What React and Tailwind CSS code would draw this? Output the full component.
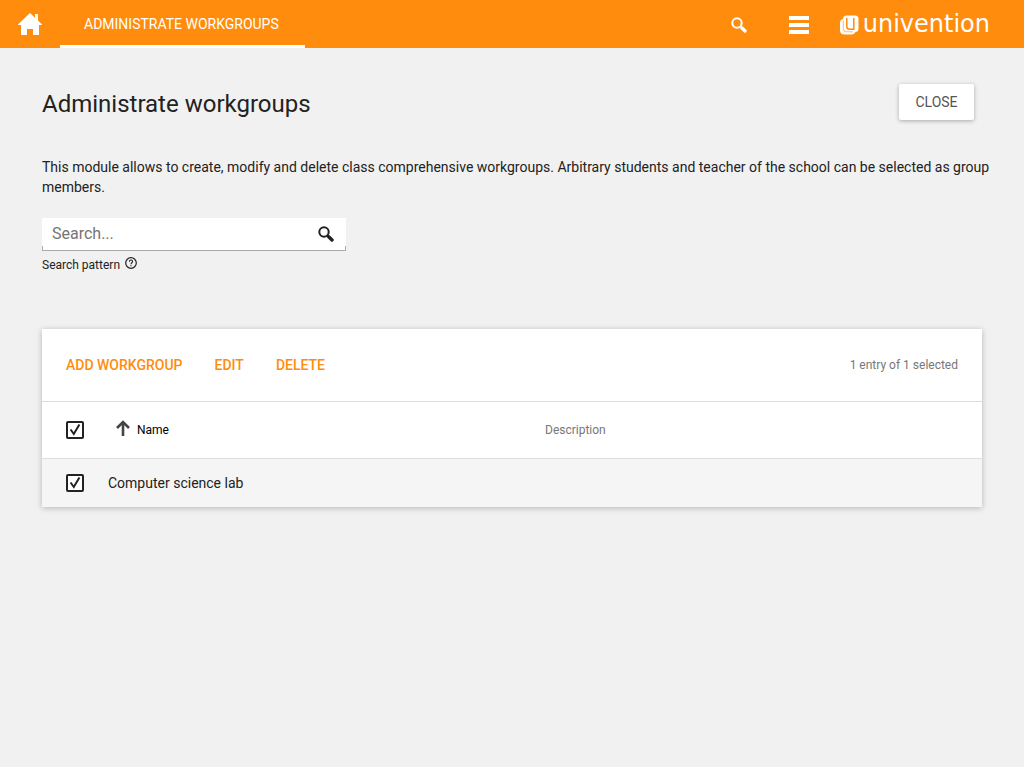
import { useState } from "react";

function HomeIcon() {
  return (
    <svg viewBox="0 0 24 22" className="h-[22px] w-6" fill="currentColor" aria-hidden="true">
      <path d="M12 0 L17 4.700 V1 H20 V7.500 L24 11.500 V12 H21 V22 H15 V16 H9 V22 H3 V12 H0 V11.500 Z" />
    </svg>
  );
}

function SearchIcon() {
  return (
    <svg viewBox="0 0 16 16" className="size-4" fill="none" stroke="currentColor" aria-hidden="true">
      <circle cx="6" cy="6" r="4.700" strokeWidth="2" />
      <path d="M9.300 9.300 L10.500 10.500" strokeWidth="2" />
      <path d="M10.700 10.700 L14 14" strokeWidth="3.400" strokeLinecap="round" />
    </svg>
  );
}

function MenuIcon() {
  return (
    <svg viewBox="0 0 20 18" className="h-[18px] w-5" fill="currentColor" aria-hidden="true">
      <path d="M0 0h20v4H0zM0 7h20v4H0zM0 14h20v4H0z" />
    </svg>
  );
}

function LogoMark() {
  return (
    <svg viewBox="0 0 19 20" className="h-5 w-[19px]" fill="none" aria-hidden="true">
      <path d="M3 4 Q0 4.500 0 8 V15 Q0 19.500 4.500 19.500 H11 Q15 19.500 15.500 16.500 L4 15 Z" fill="white" />
      <rect x="3" y="0.500" width="15.500" height="16.500" rx="3.500" fill="white" />
      <path d="M6.800 3 V11.500 Q6.800 14.300 9.500 14.300 H13.800 V3" stroke="#ff8c0c" strokeWidth="1.500" />
      <path d="M3.300 5.500 V13.500 Q3.300 16.800 6.500 16.800 H13" stroke="#ff8c0c" strokeWidth="0.600" />
    </svg>
  );
}

function HelpIcon() {
  return (
    <svg viewBox="0 0 12 12" className="size-3" fill="none" stroke="currentColor" aria-hidden="true">
      <circle cx="6" cy="6" r="5.300" strokeWidth="1.200" />
      <path d="M4.400 4.800 C4.400 2.500 7.600 2.500 7.600 4.600 C7.600 5.800 6 5.800 6 7.200" strokeWidth="1.100" />
      <path d="M6 8.200 V9.300" strokeWidth="1.200" />
    </svg>
  );
}

function SortIcon() {
  return (
    <svg viewBox="0 0 14 16" className="h-4 w-3.5" fill="none" stroke="#444" strokeWidth="2.600" aria-hidden="true">
      <path d="M7 16 V2 M1 8 L7 2 L13 8" />
    </svg>
  );
}

function Checkbox({ label, checked, onChange }) {
  return (
    <label className="grid size-[18px] place-items-center">
      <input
        type="checkbox"
        aria-label={label}
        checked={checked}
        onChange={onChange}
        className="col-start-1 row-start-1 size-[18px] appearance-none rounded-xs border-2 border-[#222] bg-white"
      />
      {checked && (
        <svg viewBox="0 0 18 18" className="pointer-events-none col-start-1 row-start-1 size-[18px]" fill="none" stroke="#222" strokeWidth="2" aria-hidden="true">
          <path d="M4.600 8.500 L7.800 13 L13.400 3.500" />
        </svg>
      )}
    </label>
  );
}

const actions = ["Add workgroup", "Edit", "Delete"];

export default function App() {
  const [selected, setSelected] = useState(true);
  const toggle = () => setSelected(!selected);

  return (
    <div className="min-h-screen bg-[#f1f1f1] font-['Roboto',sans-serif] text-sm text-[#222]">
      <header className="flex h-12 bg-[#ff8c0c] text-white">
        <button aria-label="Home" className="flex w-15 items-center justify-center">
          <HomeIcon />
        </button>
        <button className="min-w-[245px] border-b-3 border-white px-6 pt-[3px] text-left uppercase">
          Administrate workgroups
        </button>
        <div className="ml-auto flex items-center pt-px pr-[34px]">
          <button aria-label="Search" className="mr-[42px]">
            <SearchIcon />
          </button>
          <button aria-label="Menu" className="mr-[31px]">
            <MenuIcon />
          </button>
          <a href="#" className="flex items-center gap-1">
            <LogoMark />
            <span className="pb-0.5 font-['DejaVu_Sans',sans-serif] text-2xl leading-6">univention</span>
          </a>
        </div>
      </header>

      <main className="px-[42px] pt-9">
        <div className="flex items-center justify-between pr-2">
          <h1 className="pt-1 text-2xl">Administrate workgroups</h1>
          <button className="h-9 min-w-[75px] rounded-xs bg-white px-4 text-[#555] uppercase shadow-[0_1px_4px_rgba(0,0,0,0.3)]">
            Close
          </button>
        </div>

        <p className="-mr-6 mt-[37px] leading-5">
          This module allows to create, modify and delete class comprehensive workgroups. Arbitrary students and teacher
          of the school can be selected as group members.
        </p>

        <form className="mt-[21px] w-[304px]" onSubmit={(e) => e.preventDefault()}>
          <div className="flex h-[33px] flex-col bg-white">
            <div className="flex h-7 items-end">
              <input
                id="pattern"
                type="text"
                placeholder="Search..."
                className="h-6 min-w-0 flex-1 px-2.5 text-base outline-none placeholder:text-[#757575]"
              />
              <button aria-label="Start search" className="mr-3 mb-1">
                <SearchIcon />
              </button>
            </div>
            <div className="flex-1 border-x border-b border-[#aaa]" />
          </div>
          <div className="mt-1 flex items-center gap-[5px] text-xs leading-5">
            <label htmlFor="pattern">Search pattern</label>
            <span className="pb-1">
              <HelpIcon />
            </span>
          </div>
        </form>

        <section className="mt-[54px] bg-white shadow-[0_1px_6px_rgba(0,0,0,0.25)]">
          <div className="flex h-[72px] items-center gap-8 px-6">
            {actions.map((name) => (
              <button key={name} className="font-medium text-[#ff8c0c] uppercase">
                {name}
              </button>
            ))}
            <span className="ml-auto text-xs text-[#777]">{selected ? 1 : 0} entry of 1 selected</span>
          </div>
          <table className="w-full table-fixed text-left">
            <thead>
              <tr className="h-[57px] border-t border-[#ddd] text-xs">
                <th className="w-[58px] pl-6">
                  <Checkbox label="Select all" checked={selected} onChange={toggle} />
                </th>
                <th className="pl-4 font-normal text-black">
                  <button className="flex items-center gap-[7px]">
                    <span className="pb-1">
                      <SortIcon />
                    </span>
                    Name
                  </button>
                </th>
                <th className="pl-1 font-normal text-[#777]">Description</th>
              </tr>
            </thead>
            <tbody>
              <tr className="h-12 border-t border-[#ddd] bg-[#f5f5f5]">
                <td className="pl-6">
                  <Checkbox label="Select Computer science lab" checked={selected} onChange={toggle} />
                </td>
                <td className="pl-2">Computer science lab</td>
                <td />
              </tr>
            </tbody>
          </table>
        </section>
      </main>
    </div>
  );
}
